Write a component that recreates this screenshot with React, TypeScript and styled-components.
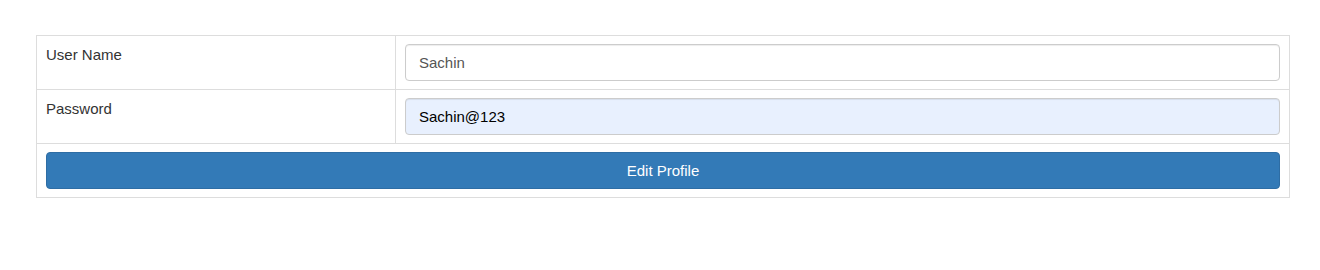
import React from 'react';
import styled, { createGlobalStyle } from 'styled-components';

const GlobalStyle = createGlobalStyle`
    body {
        margin: 0;
        background: #fff;
        font-family: "Liberation Sans", Arial, sans-serif;
        font-size: 15px;
        color: #333;
    }
`;

const Page = styled.div`
    padding: 35px 30px 0 36px;
`;

const ProfileTable = styled.table`
    width: 1254px;
    table-layout: fixed;
    border-collapse: collapse;
    border-spacing: 0;
    border: 1px solid #ddd;
`;

const Cell = styled.td<{ $label?: boolean }>`
    border: 1px solid #ddd;
    padding: 8px 9px;
    vertical-align: top;
    line-height: 21px;
    width: ${(p) => (p.$label ? '340px' : 'auto')};
`;

const Input = styled.input<{ $filled?: boolean }>`
    display: block;
    box-sizing: border-box;
    width: 100%;
    height: 37px;
    margin: 0;
    padding: 6px 13px;
    font-family: inherit;
    font-size: 15px;
    color: ${(p) => (p.$filled ? '#000' : '#555')};
    background: ${(p) => (p.$filled ? '#e8f0fe' : '#fff')};
    border: 1px solid #ccc;
    border-radius: 4px;
    box-shadow: inset 0 1px 1px rgba(0, 0, 0, 0.075);
    outline: none;
`;

const SubmitButton = styled.button`
    display: block;
    box-sizing: border-box;
    width: 100%;
    height: 37px;
    margin: 0;
    padding: 0 13px;
    font-family: inherit;
    font-size: 15px;
    color: #fff;
    background: #337ab7;
    border: 1px solid #2e6da4;
    border-radius: 4px;
    cursor: pointer;
`;

const App = () => {
    return (
        <>
            <GlobalStyle />
            <Page>
                <ProfileTable>
                    <tbody>
                        <tr>
                            <Cell $label>User Name</Cell>
                            <Cell>
                                <Input type="text" defaultValue="Sachin" />
                            </Cell>
                        </tr>
                        <tr>
                            <Cell $label>Password</Cell>
                            <Cell>
                                <Input type="text" defaultValue="Sachin@123" $filled />
                            </Cell>
                        </tr>
                        <tr>
                            <Cell colSpan={2}>
                                <SubmitButton type="button">Edit Profile</SubmitButton>
                            </Cell>
                        </tr>
                    </tbody>
                </ProfileTable>
            </Page>
        </>
    );
};

export default App;
